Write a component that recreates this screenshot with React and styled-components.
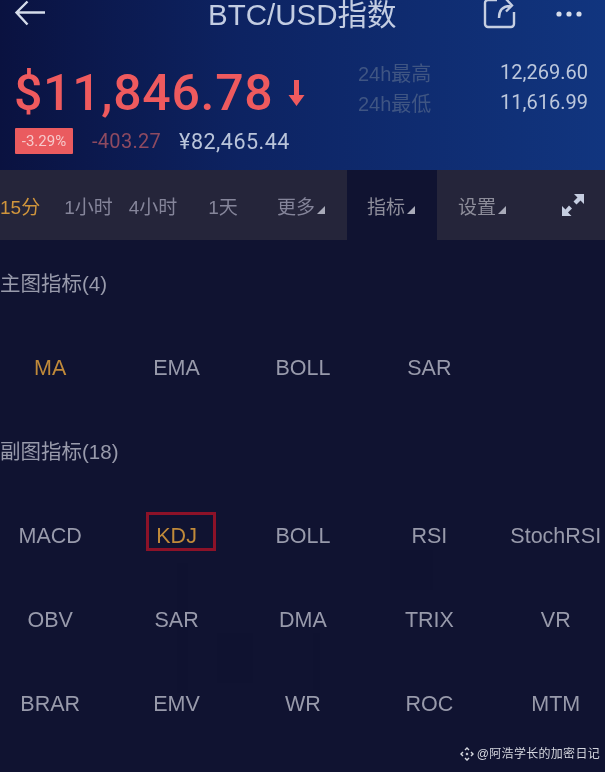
import styled, { createGlobalStyle } from "styled-components";

const GlobalStyle = createGlobalStyle`
  html, body {
    margin: 0;
    padding: 0;
    background: #101331;
  }
  body {
    font-family: "Liberation Sans", "Noto Sans CJK SC", sans-serif;
  }
`;

const Page = styled.div`
  position: relative;
  width: 605px;
  height: 772px;
  overflow: hidden;
  background: #101331;
  filter: blur(0.6px);
`;

const Header = styled.header`
  height: 170px;
  box-sizing: border-box;
  background: linear-gradient(90deg, #0a1240 0%, #0d2362 40%, #11357f 100%);
  display: flex;
  flex-direction: column;
`;

const NavBar = styled.div`
  height: 28px;
  display: flex;
  align-items: center;
  padding: 0 22px 0 14px;
`;

const NavTitle = styled.div`
  flex: 1;
  padding-top: 2px;
  font-size: 29.5px;
  line-height: 28px;
  color: #c3cde2;
  margin-left: 162px;
  white-space: nowrap;
`;

const NavActions = styled.div`
  display: flex;
  align-items: center;
  gap: 38px;
`;

const Quote = styled.div`
  display: flex;
  justify-content: space-between;
  padding: 37px 17px 0 15px;
`;

const QuoteLeft = styled.div`
  display: flex;
  flex-direction: column;
`;

const PriceRow = styled.div`
  display: flex;
  align-items: center;
  gap: 15px;
  margin-left: -1px;
`;

const Price = styled.div`
  font-family: "Roboto", sans-serif;
  font-size: 50px;
  line-height: 56px;
  font-weight: 500;
  letter-spacing: 0.7px;
  color: #ee5a5e;
  white-space: nowrap;
`;

const ChangeRow = styled.div`
  display: flex;
  align-items: center;
  margin-top: 7px;
  font-family: "Roboto", sans-serif;
  font-size: 20px;
`;

const ChangeBadge = styled.div`
  width: 58px;
  height: 26px;
  border-radius: 1px;
  background: #ea5b5f;
  color: #f6c9ca;
  font-size: 15px;
  line-height: 26px;
  text-align: center;
`;

const ChangeValue = styled.span`
  margin-left: 19px;
  color: #8e4a60;
  letter-spacing: 0.3px;
`;

const FiatValue = styled.span`
  margin-left: 18px;
  font-size: 21.5px;
  color: #b9c4da;
  letter-spacing: 0.5px;
`;

const Stats = styled.div`
  width: 230px;
  display: grid;
  grid-template-columns: 1fr auto;
  grid-auto-rows: 30px;
  margin-top: -8px;
  align-items: center;
  font-size: 20px;
`;

const StatLabel = styled.span`
  color: #3f5583;
`;

const StatValue = styled.span`
  font-family: "Roboto", sans-serif;
  color: #bcc7dc;
`;

const Toolbar = styled.div`
  height: 70px;
  display: flex;
  align-items: stretch;
  background: #25253a;
`;

const Tab = styled.div`
  display: flex;
  align-items: center;
  gap: 2px;
  margin-left: ${(p) => p.$offset || 0}px;
  padding-top: 1px;
  font-size: 19px;
  color: ${(p) => (p.$selected ? "#d0953c" : "#85859a")};
  white-space: nowrap;
`;

const MenuTab = styled(Tab)`
  width: ${(p) => p.$width}px;
  padding-left: ${(p) => p.$pad}px;
  box-sizing: border-box;
  color: #8d8d9a;
  background: ${(p) => (p.$open ? "#101331" : "transparent")};
`;

const Caret = styled.i`
  width: 0;
  height: 0;
  margin-top: 9px;
  border-left: 8px solid transparent;
  border-bottom: 8px solid #a9abb9;
`;

const ExpandButton = styled.div`
  margin-left: 24px;
  display: flex;
  align-items: center;
`;

const Section = styled.section`
  position: relative;
  padding-top: ${(p) => p.$top}px;
`;

const SectionTitle = styled.h2`
  margin: 0;
  font-size: 20.5px;
  line-height: 28px;
  font-weight: 400;
  color: #989aab;
  white-space: nowrap;
`;

const IndicatorGrid = styled.div`
  display: grid;
  grid-template-columns: repeat(5, 126.4px);
  grid-auto-rows: 84px;
  margin: 28px 0 0 -13px;
`;

const Indicator = styled.div`
  position: relative;
  display: flex;
  align-items: center;
  justify-content: center;
  font-size: 21.5px;
  color: ${(p) => (p.$active ? "#c08a3a" : "#989aab")};
  white-space: nowrap;
`;

// red annotation drawn over the screenshot, sits off-centre from the label
const Highlight = styled.span`
  position: absolute;
  left: 33px;
  top: 18px;
  box-sizing: border-box;
  width: 70px;
  height: 39px;
  border: 3px solid #8c1228;
`;

// the chart behind the panel shows through very faintly
const GhostChart = styled.svg`
  position: absolute;
  left: 0;
  top: 0;
  pointer-events: none;
`;

const Watermark = styled.div`
  position: absolute;
  right: 5px;
  bottom: 10px;
  display: flex;
  align-items: center;
  gap: 3px;
  font-size: 12px;
  line-height: 16px;
  color: #d4d6de;
  letter-spacing: 0.3px;
`;

function BackIcon() {
  return (
    <svg width="32" height="28" viewBox="0 0 32 28" fill="none" stroke="#d5dcea" strokeWidth="2.4">
      <path d="M31 12.5H3M13.5 1.5L2.5 12.5L13.5 24.5" />
    </svg>
  );
}

function ShareIcon() {
  return (
    <svg width="34" height="32" viewBox="0 0 34 32" fill="none" stroke="#c6cfe2" strokeWidth="2.4">
      <path d="M14 2H5a3 3 0 0 0-3 3v21a3 3 0 0 0 3 3h23a3 3 0 0 0 3-3V14" />
      <path d="M16 20c0-7 3-12 11-12M23 1l6 6.500-6 6" />
    </svg>
  );
}

function MoreIcon() {
  return (
    <svg width="28" height="8" viewBox="0 0 28 8" fill="#d5dcea">
      <circle cx="4" cy="4" r="2.600" />
      <circle cx="14" cy="4" r="2.600" />
      <circle cx="24" cy="4" r="2.600" />
    </svg>
  );
}

function DownArrow() {
  return (
    <svg width="17" height="28" viewBox="0 0 17 28" fill="#ee5a5e">
      <path d="M6 1h5v15h5.500L8.500 27 .5 16H6z" />
    </svg>
  );
}

function ExpandIcon() {
  return (
    <svg width="24" height="24" viewBox="0 0 24 24" fill="#c5cde0">
      <path d="M13 1h10v10l-3.500-3.500-4 4-3-3 4-4zM1 13l3.500 3.500 3.500-4 3 3-4 4L10.500 23H1z" />
    </svg>
  );
}

function WatermarkLogo() {
  return (
    <svg width="14" height="14" viewBox="0 0 14 14" fill="#d4d6de">
      <path d="M7 0l2.500 2.500-1 1L7 2 5.500 3.500l-1-1zM2.500 4.500l1 1L2 7l1.500 1.500-1 1L0 7zM11.500 4.500L14 7l-2.500 2.500-1-1L12 7l-1.500-1.500zM7 5.500L8.500 7 7 8.500 5.500 7zM4.500 11.500l1-1L7 12l1.500-1.500 1 1L7 14z" />
    </svg>
  );
}

const ghostBars = [
  [177, 563, 11, 130],
  [217, 633, 36, 50],
  [313, 633, 7, 57],
  [390, 550, 43, 40],
];

const mainIndicators = ["MA", "EMA", "BOLL", "SAR"];
const subIndicators = [
  "MACD", "KDJ", "BOLL", "RSI", "StochRSI",
  "OBV", "SAR", "DMA", "TRIX", "VR",
  "BRAR", "EMV", "WR", "ROC", "MTM",
];

export default function App() {
  return (
    <Page>
      <GlobalStyle />
      <GhostChart width="605" height="772" fill="#0f1230">
        {ghostBars.map(([x, y, w, h]) => (
          <rect key={x} x={x} y={y} width={w} height={h} />
        ))}
      </GhostChart>
      <Header>
        <NavBar>
          <BackIcon />
          <NavTitle>BTC/USD指数</NavTitle>
          <NavActions>
            <ShareIcon />
            <MoreIcon />
          </NavActions>
        </NavBar>
        <Quote>
          <QuoteLeft>
            <PriceRow>
              <Price>$11,846.78</Price>
              <DownArrow />
            </PriceRow>
            <ChangeRow>
              <ChangeBadge>-3.29%</ChangeBadge>
              <ChangeValue>-403.27</ChangeValue>
              <FiatValue>¥82,465.44</FiatValue>
            </ChangeRow>
          </QuoteLeft>
          <Stats>
            <StatLabel>24h最高</StatLabel>
            <StatValue>12,269.60</StatValue>
            <StatLabel>24h最低</StatLabel>
            <StatValue>11,616.99</StatValue>
          </Stats>
        </Quote>
      </Header>

      <Toolbar>
        <Tab $selected>15分</Tab>
        <Tab $offset={24}>1小时</Tab>
        <Tab $offset={16}>4小时</Tab>
        <Tab $offset={31}>1天</Tab>
        <Tab $offset={39}>
          更多
          <Caret />
        </Tab>
        <MenuTab $open $offset={22} $width={90} $pad={20}>
          指标
          <Caret />
        </MenuTab>
        <MenuTab $width={100} $pad={21}>
          设置
          <Caret />
        </MenuTab>
        <ExpandButton>
          <ExpandIcon />
        </ExpandButton>
      </Toolbar>

      <Section $top={30}>
        <SectionTitle>主图指标(4)</SectionTitle>
        <IndicatorGrid>
          {mainIndicators.map((name, i) => (
            <Indicator key={name} $active={i === 0}>
              {name}
            </Indicator>
          ))}
        </IndicatorGrid>
      </Section>

      <Section $top={28}>
        <SectionTitle>副图指标(18)</SectionTitle>
        <IndicatorGrid>
          {subIndicators.map((name) => (
            <Indicator key={name} $active={name === "KDJ"}>
              {name}
              {name === "KDJ" && <Highlight />}
            </Indicator>
          ))}
        </IndicatorGrid>
      </Section>

      <Watermark>
        <WatermarkLogo />
        @阿浩学长的加密日记
      </Watermark>
    </Page>
  );
}
